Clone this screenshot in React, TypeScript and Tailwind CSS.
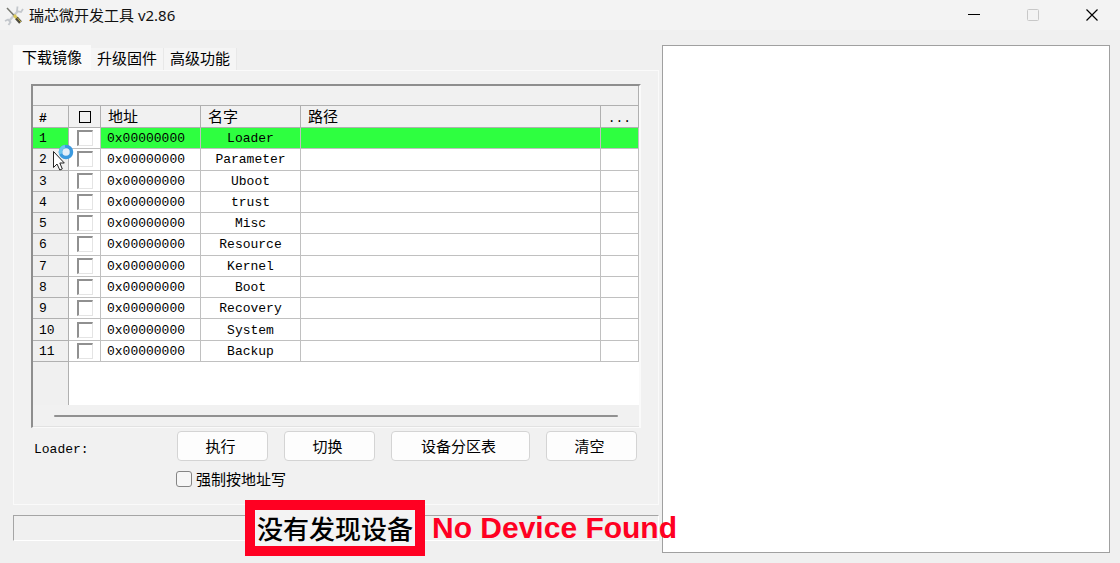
import React, { useState } from 'react';

const IMAGES = [
  'Loader',
  'Parameter',
  'Uboot',
  'trust',
  'Misc',
  'Resource',
  'Kernel',
  'Boot',
  'Recovery',
  'System',
  'Backup',
];

const TABS = ['下载镜像', '升级固件', '高级功能'];

const ToolsIcon = () => (
  <svg width="20" height="22" viewBox="0 0 20 22" fill="none">
    <path d="M5 17 L14 7" stroke="#c9cdd2" strokeWidth="2.4" />
    <path d="M1 17 L4 15.500 L6.500 18 L4.500 21" stroke="#c3c7cc" strokeWidth="1.800" />
    <path d="M13.500 2.500 L13 7 L17 8 L19 5" stroke="#c3c7cc" strokeWidth="1.800" />
    <path d="M3 4 L11 12.500" stroke="#74756d" strokeWidth="1.5" />
    <path d="M10 11 L13 14.500" stroke="#d8c65a" strokeWidth="3" />
    <path d="M12.500 14 L16.500 18.500" stroke="#4d4a3c" strokeWidth="3.600" />
    <path d="M13.500 14 L17 18" stroke="#c9b74c" strokeWidth="1" />
  </svg>
);

const BusyCursor = () => (
  <svg width="24" height="30" viewBox="0 0 24 30" fill="none">
    <circle cx="14" cy="9" r="5.500" stroke="#3b9ae0" strokeWidth="3.500" fill="#e4eef8" />
    <path d="M8.800 11 A5.500 5.500 0 0 1 13 3.500" stroke="#6cc4ee" strokeWidth="3.500" />
    <path
      d="M1.500 8.500 V24.500 L5 21 L7.800 27 L10.300 25.900 L7.800 20 H12.300 Z"
      fill="#fff"
      stroke="#222"
      strokeWidth="1"
    />
  </svg>
);

const TitleBar = () => (
  <header className="flex h-[30px] items-center bg-[#f3f3f3] pl-1 pr-[21px]">
    <ToolsIcon />
    <h1 className="ml-[5px] flex-1 text-[15px] leading-5 text-[#111]">瑞芯微开发工具 v2.86</h1>
    <div className="flex items-center gap-[45px]">
      <button aria-label="Minimize">
        <svg width="14" height="14" viewBox="0 0 14 14" stroke="#000" fill="none">
          <path d="M1 6.500 H13" />
        </svg>
      </button>
      <button aria-label="Maximize" disabled>
        <svg width="14" height="14" viewBox="0 0 14 14" stroke="#c8c8c8" fill="none">
          <rect x="1.500" y="1.500" width="11" height="11" rx="1" />
        </svg>
      </button>
      <button aria-label="Close">
        <svg width="14" height="14" viewBox="0 0 14 14" stroke="#000" strokeWidth="1.200" fill="none">
          <path d="M1.500 1.500 L12.500 12.500 M12.500 1.500 L1.500 12.500" />
        </svg>
      </button>
    </div>
  </header>
);

const PushButton: React.FC<{ label: string; wide?: boolean }> = ({ label, wide }) => (
  <button
    className={`h-[30px] rounded border border-[#d4d4d4] bg-[#fdfdfd] pr-1 text-[15px] leading-5 hover:bg-[#eef6fc] ${
      wide ? 'w-[139px]' : 'w-[91px]'
    }`}
  >
    {label}
  </button>
);

export default function App() {
  const [activeTab, setActiveTab] = useState(0);
  const [selected, setSelected] = useState(0);

  return (
    <div className="flex min-h-screen flex-col bg-[#f0f0f0] font-['Noto_Sans','Noto_Sans_CJK_SC',sans-serif] text-black">
      <TitleBar />

      <main className="grid flex-1 grid-cols-[646fr_448fr] gap-[3px] pb-[10px] pl-[13px] pr-[10px] pt-[15px]">
        <section className="flex min-w-0 flex-col">
          {/* Tabs */}
          <div role="tablist" className="flex items-end">
            {TABS.map((tab, i) => (
              <button
                key={tab}
                role="tab"
                aria-selected={activeTab === i}
                onClick={() => setActiveTab(i)}
                className={`whitespace-nowrap pb-[2px] text-[15px] leading-5 ${
                  activeTab === i
                    ? 'h-[25px] bg-[#fafafa] px-[9px]'
                    : 'h-[22px] border-r border-[#e8e8e8] bg-[#f5f5f5] px-[6px]'
                }`}
              >
                {tab}
              </button>
            ))}
          </div>

          {/* Tab page */}
          <div className="h-[435px] border border-[#fafafa] bg-[#f1f1f1] px-[17px] pt-[13px]">
            <div className="relative border-b border-l-2 border-r-2 border-t-2 border-b-[#fafafa] border-l-[#8e8e8e] border-r-[#fafafa] border-t-[#8e8e8e]">
              <table className="h-[276px] w-full table-fixed border-separate border-spacing-0 font-['Liberation_Mono','Noto_Sans_CJK_SC',monospace] text-[13px] leading-4">
                <colgroup>
                  <col className="w-[36px]" />
                  <col className="w-[32px]" />
                  <col className="w-[100px]" />
                  <col className="w-[100px]" />
                  <col />
                  <col className="w-[38px]" />
                </colgroup>
                <thead>
                  <tr className="h-5">
                    <td colSpan={6} className="border-b border-r border-[#b0b0b0] p-0" />
                  </tr>
                  <tr className="h-[22px] text-left">
                    <th className="border-b border-r border-[#b0b0b0] p-0 pl-[6px] pt-1 font-bold">#</th>
                    <th className="border-b border-r border-[#b0b0b0] p-0">
                      <span className="mx-auto block size-3 border border-black" />
                    </th>
                    <th className="border-b border-r border-[#b0b0b0] p-0 pl-[7px] pt-1 text-[15px] font-normal">地址</th>
                    <th className="border-b border-r border-[#b0b0b0] p-0 pl-[7px] pt-1 text-[15px] font-normal">名字</th>
                    <th className="border-b border-r border-[#b0b0b0] p-0 pl-[7px] pt-1 text-[15px] font-normal">路径</th>
                    <th className="border-b border-r border-[#b0b0b0] p-0 pt-1 text-center font-normal">...</th>
                  </tr>
                </thead>
                <tbody>
                  {IMAGES.map((name, i) => {
                    const cell =
                      'border-b border-r border-[#c0c0c0] p-0 ' + (selected === i ? 'bg-[#2eff40]' : 'bg-white');
                    return (
                      <tr key={name} onClick={() => setSelected(i)}>
                        <td
                          className={`border-b border-r border-[#b0b0b0] p-0 pl-[6px] pt-[2px] ${
                            selected === i ? 'bg-[#2eff40]' : 'bg-[#f0f0f0]'
                          }`}
                        >
                          {i + 1}
                        </td>
                        <td className="border-b border-r border-[#c0c0c0] bg-white p-0">
                          <input
                            type="checkbox"
                            aria-label={name}
                            className="mx-auto block size-4 appearance-none border-b border-l-2 border-r border-t-2 border-b-[#e4e4e4] border-l-[#909090] border-r-[#e4e4e4] border-t-[#909090] bg-white checked:bg-gray-500"
                          />
                        </td>
                        <td className={`${cell} pl-[6px] pt-[2px]`}>0x00000000</td>
                        <td className={`${cell} pt-[2px] text-center`}>{name}</td>
                        <td className={cell} />
                        <td className={cell} />
                      </tr>
                    );
                  })}
                </tbody>
              </table>
              {/* Empty part of the list and its scroll bar */}
              <div className="flex h-[43px] bg-white">
                <div className="w-[36px] border-r border-[#b0b0b0] bg-[#f0f0f0]" />
              </div>
              <div className="h-[22px] border-b border-[#e2e2e2] px-[21px] pt-[10px]">
                <div className="h-[2px] rounded bg-[#919191]" />
              </div>
              <div className="pointer-events-none absolute left-[19px] top-[57px]">
                <BusyCursor />
              </div>
            </div>

            <div className="flex items-center pr-1 pt-[3px]">
              <span className="flex-1 pl-[3px] pt-2 font-['Liberation_Mono',monospace] text-[13px] leading-4">
                Loader:
              </span>
              <div className="flex gap-4">
                <PushButton label="执行" />
                <PushButton label="切换" />
                <PushButton label="设备分区表" wide />
                <PushButton label="清空" />
              </div>
            </div>
            <label className="ml-[145px] mt-2 flex items-center gap-1 text-[15px] leading-5">
              <input
                type="checkbox"
                className="size-4 appearance-none rounded-[3px] border border-[#858585] bg-[#f6f6f6] checked:bg-[#0067c0]"
              />
              强制按地址写
            </label>
          </div>

          {/* Status bar */}
          <div className="relative mt-[10px] h-[26px] border border-b-white border-l-[#a5a5a5] border-r-white border-t-[#a5a5a5]">
            <div className="absolute left-[231px] top-[-16px] z-10 flex items-center gap-[7px] whitespace-nowrap">
              <div className="flex h-[56px] w-[180px] items-center justify-center border-[10px] border-[#ff0022] bg-[#f3f3f3] font-['Noto_Sans_CJK_SC',sans-serif] text-[26px] font-medium leading-8">
                没有发现设备
              </div>
              <span className="font-['Liberation_Sans',sans-serif] text-[30px] font-bold leading-8 text-[#ff0022]">
                No Device Found
              </span>
            </div>
          </div>
        </section>

        {/* Log output */}
        <section aria-label="log" className="border border-[#a0a0a0] bg-white" />
      </main>
    </div>
  );
}
